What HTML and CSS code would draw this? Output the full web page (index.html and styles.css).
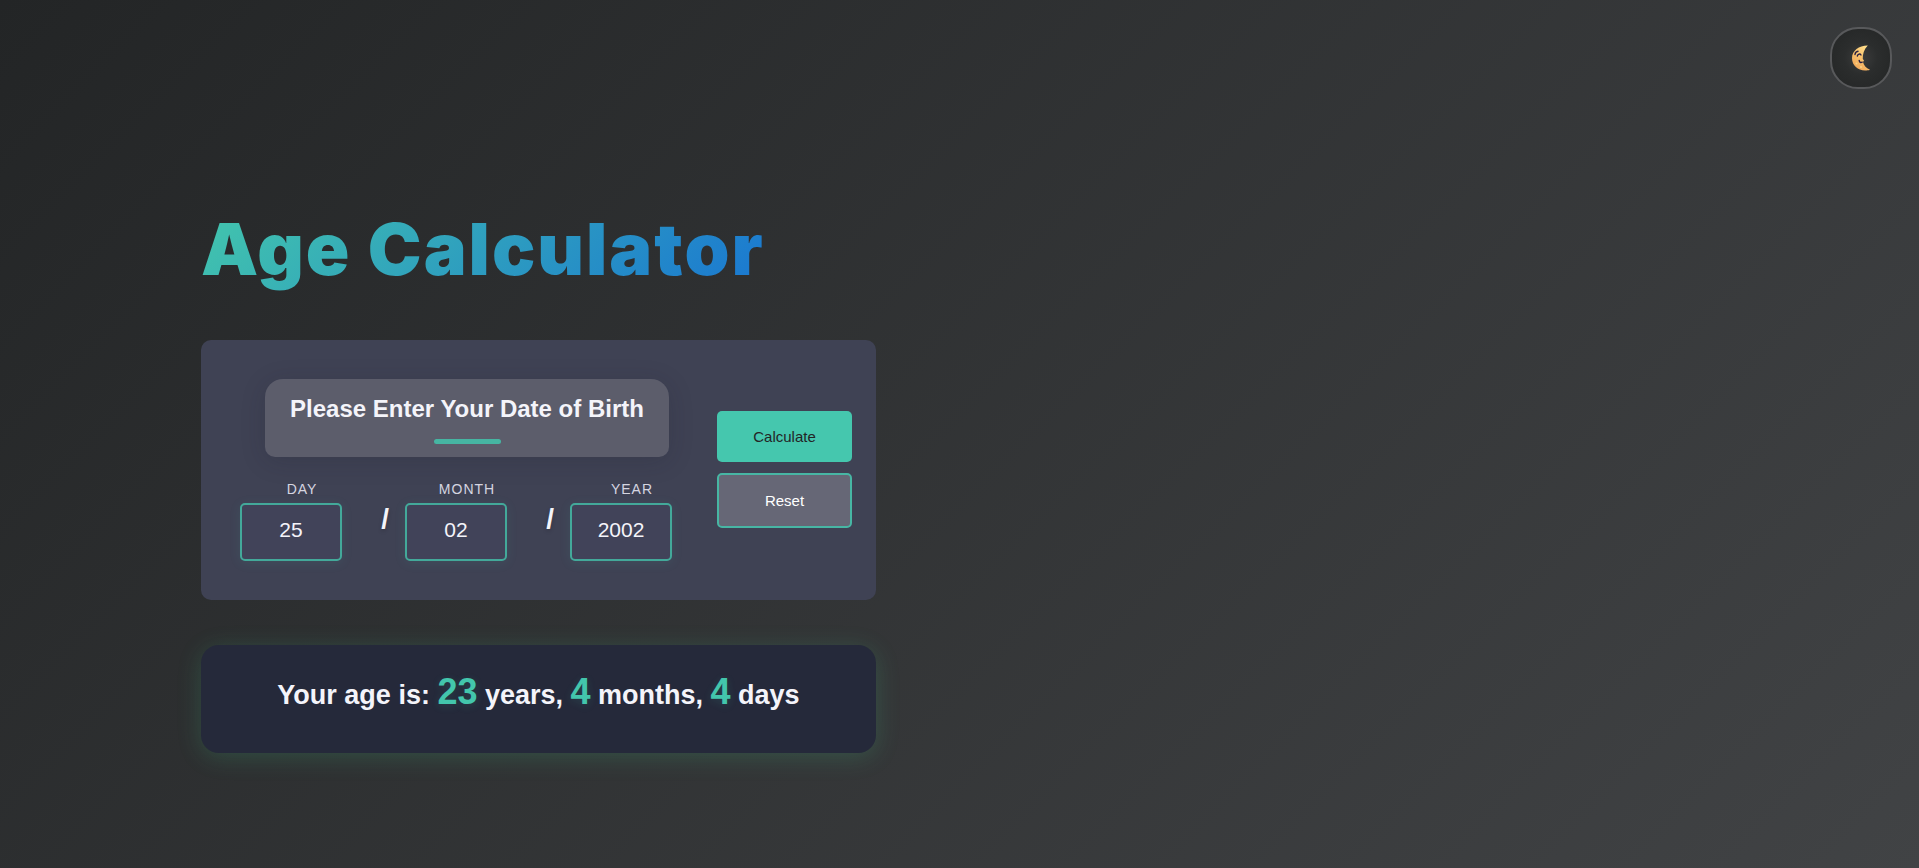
FILE: index.html
```html
<!DOCTYPE html>
<html lang="en">
<head>
<meta charset="utf-8">
<meta name="viewport" content="width=device-width, initial-scale=1">
<title>Age Calculator</title>
<link rel="stylesheet" href="styles.css">
</head>
<body>
<button class="theme-toggle" type="button" aria-label="Toggle theme">
  <svg class="moon" viewBox="0 0 18 26" aria-hidden="true">
    <defs>
      <linearGradient id="moon-fill" x1="0.8" y1="0" x2="0.2" y2="1">
        <stop offset="0" stop-color="#ffdf8c"/>
        <stop offset="0.5" stop-color="#f8c06c"/>
        <stop offset="1" stop-color="#f0a457"/>
      </linearGradient>
    </defs>
    <path d="M15.800.6C7 .5 0 6 0 13.200c0 7 6 12.300 13 12.300 2 0 3.800-.2 5-.8-4-1.700-6.300-4.500-7-7.700l1-1.500-1.200-1.500C10.500 9.500 12 4.500 15.800.6z" fill="url(#moon-fill)"/>
    <path d="M3 9.500C3.200 7.600 4.200 6.500 6 6.300M5.300 11c.6-2 2.700-2.600 3.700-1M7.200 15.500c.4 2 1.600 2.500 3 1.700" fill="none" stroke="#2b2145" stroke-width="1.400" stroke-linecap="round"/>
    <circle cx="4.500" cy="18.500" r="1" fill="#f7cf83"/>
    <circle cx="9" cy="22" r="1" fill="#f9d48a"/>
  </svg>
</button>
<main class="page">
  <h1 class="title">Age Calculator</h1>
  <form class="card">
    <div class="entry">
      <h2 class="prompt">Please Enter Your Date of Birth</h2>
      <div class="date-row">
        <div class="field">
          <label class="field-label" for="day">Day</label>
          <input class="field-input" id="day" type="text" inputmode="numeric" value="25">
        </div>
        <span class="slash">/</span>
        <div class="field">
          <label class="field-label" for="month">Month</label>
          <input class="field-input" id="month" type="text" inputmode="numeric" value="02">
        </div>
        <span class="slash">/</span>
        <div class="field">
          <label class="field-label" for="year">Year</label>
          <input class="field-input" id="year" type="text" inputmode="numeric" value="2002">
        </div>
      </div>
    </div>
    <div class="actions">
      <button class="btn btn-primary" type="button">Calculate</button>
      <button class="btn btn-secondary" type="reset">Reset</button>
    </div>
  </form>
  <p class="result">Your age is: <strong class="num">23</strong> years, <strong class="num">4</strong> months, <strong class="num">4</strong> days</p>
</main>
</body>
</html>
```
FILE: styles.css
```css
* {
  box-sizing: border-box;
}

body {
  margin: 0;
  min-height: 100vh;
  display: flex;
  align-items: center;
  font-family: "Liberation Sans", Arial, sans-serif;
  color: #f4f4fa;
  background: linear-gradient(135deg, #232526, #414345);
}

.page {
  width: 100%;
  max-width: 876px;
  padding: 86px 0 0 201px;
}

.title {
  width: fit-content;
  margin: 0 0 44px;
  font-family: "Arial Black", Inter, sans-serif;
  font-size: 72px;
  font-weight: 900;
  line-height: 94px;
  letter-spacing: 2px;
  color: transparent;
  background: linear-gradient(135deg, #43c6ac, #1976d2);
  background-clip: text;
  -webkit-background-clip: text;
}

.card {
  display: flex;
  align-items: center;
  justify-content: space-between;
  padding: 39px 24px 39px 39px;
  border-radius: 10px;
  background: #3f4254;
}

.entry {
  display: flex;
  flex-direction: column;
  align-items: center;
  gap: 24px;
}

.prompt {
  margin: 0;
  padding: 16px 25px 13px;
  border-radius: 18px 18px 10px 10px;
  font-size: 24px;
  line-height: 28px;
  background: #5c5d6b;
  box-shadow: 0 4px 24px rgba(30, 30, 45, 0.18);
}

.prompt::after {
  content: "";
  display: block;
  width: 67px;
  height: 5px;
  margin: 16px auto 0;
  border-radius: 3px;
  background: #46b5a2;
}

.date-row {
  display: flex;
  align-items: center;
  gap: 16px;
}

.field {
  width: 124px;
}

.field-label {
  display: block;
  margin-bottom: 6px;
  font-size: 14px;
  line-height: 16px;
  letter-spacing: 1px;
  text-align: center;
  text-transform: uppercase;
  color: #d5d5e0;
}

.field-input {
  display: block;
  width: 102px;
  height: 58px;
  padding: 0 10px 4px;
  border: 2px solid #43a99a;
  border-radius: 5px;
  font: 21px "Liberation Sans", Arial, sans-serif;
  text-align: center;
  color: #f4f4fa;
  background: #414359;
  box-shadow: 0 2px 12px rgba(67, 198, 172, 0.1);
}

.slash {
  width: 9px;
  padding-bottom: 3px;
  font-size: 28px;
  font-weight: 700;
  line-height: 32px;
  text-align: right;
  text-shadow: 0 2px 4px rgba(0, 0, 0, 0.2);
}

.actions {
  display: flex;
  flex-direction: column;
  gap: 11px;
  width: 135px;
}

.btn {
  padding: 17px 16px;
  border: 0;
  border-radius: 5px;
  font: 15px/17px "Liberation Sans", Arial, sans-serif;
}

.btn-primary {
  color: #232526;
  background: #45c7ae;
}

.btn-secondary {
  border: 2px solid #47b6a4;
  color: #ffffff;
  background: #666776;
}

.result {
  margin: 45px 0 0;
  padding: 28px 16px 36px;
  border-radius: 18px;
  font-size: 27px;
  font-weight: 700;
  line-height: 44px;
  text-align: center;
  background: #25293a;
  box-shadow: 0 4px 24px rgba(67, 198, 140, 0.2);
}

.num {
  font-size: 36px;
  line-height: 36px;
  color: #43c6ac;
  text-shadow: 0 2px 8px rgba(67, 198, 172, 0.15);
}

.theme-toggle {
  position: fixed;
  top: 27px;
  right: 27px;
  display: flex;
  align-items: center;
  justify-content: center;
  width: 62px;
  height: 62px;
  padding: 0;
  border: 2px solid #58595b;
  border-radius: 28px;
  background: radial-gradient(circle, #3c3d3d 0, #2b2d2d 40%, #272929 70%);
}

.moon {
  width: 18px;
  height: 26px;
}
```
